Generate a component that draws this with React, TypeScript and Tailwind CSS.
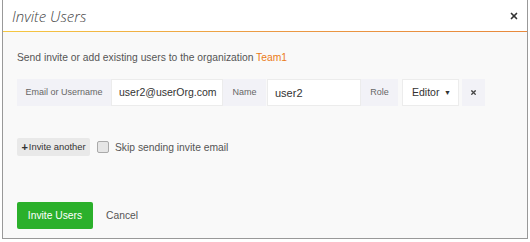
import { X } from 'lucide-react';

const Label = ({ text, className = '' }: { text: string; className?: string }) => (
    <div className={`flex items-center justify-center bg-[#f2f2f7] text-[9px] text-[#666] ${className}`}>{text}</div>
);

const App = () => {
    return (
        <div className="w-[530px] h-[242px] bg-white font-['Liberation_Sans',Arial,sans-serif]">
            <div className="ml-[2px] w-[526px] h-[239px] border border-[#999] border-t-0 bg-[#f9f9f9] flex flex-col">
                {/* Header */}
                <div className="h-[31px] bg-white flex items-center justify-between pl-[9px] pr-[8px] relative">
                    <h2 className="font-['Open_Sans',sans-serif] font-light italic text-[15px] text-[#444] leading-none mt-[1px]">Invite Users</h2>
                    <button className="text-[#333]">
                        <X className="w-[10px] h-[10px]" strokeWidth={4} />
                    </button>
                    <div className="absolute left-0 right-0 -bottom-px h-px bg-gradient-to-r from-[#f5c842] via-[#eb9a45] to-[#e8893c]" />
                </div>

                {/* Body */}
                <div className="flex-1 px-[14px] pt-[19px]">
                    <p className="text-[10.3px] text-[#555]">
                        Send invite or add existing users to the organization <span className="text-[#eb7b18]">Team1</span>
                    </p>

                    <div className="mt-[14px] flex items-stretch h-[27px] text-[#333]">
                        <Label text="Email or Username" className="w-[94px] text-[#555]" />
                        <div className="w-[112px] bg-white border border-[#ececec] flex items-center pl-[7px] text-[10.5px] overflow-hidden whitespace-nowrap">user2@userOrg.com</div>
                        <Label text="Name" className="w-[43px]" />
                        <div className="ml-px w-[94px] bg-white border border-[#ececec] flex items-center pl-[7px] text-[11px]">user2</div>
                        <Label text="Role" className="w-[37px]" />
                        <div className="ml-[4px] w-[57px] bg-white border border-[#ececec] flex items-center justify-between pl-[9px] pr-[7px] text-[10.5px]">
                            Editor
                            <span className="text-[7px]">▼</span>
                        </div>
                        <div className="ml-[3px] w-[23px] bg-[#f2f2f7] flex items-center justify-center">
                            <X className="w-[7px] h-[7px] text-[#444]" strokeWidth={4.5} />
                        </div>
                    </div>

                    <div className="mt-[32px] flex items-center">
                        <button className="w-[73px] h-[18px] bg-[#e9e9e9] text-[9.4px] text-[#333] flex items-center justify-center rounded-[2px]">
                            <span className="font-bold text-[11px] mr-[1px] leading-none">+</span>Invite another
                        </button>
                        <div className="ml-[7px] w-[12px] h-[12px] border border-[#aaa] bg-[#e6e6e6] rounded-[2px]" />
                        <span className="ml-[6px] text-[10.3px] text-[#555]">Skip sending invite email</span>
                    </div>

                    <div className="mt-[46px] flex items-center">
                        <button className="w-[76px] h-[27px] bg-[#2bb02b] text-white text-[10.3px] rounded-[2px]">Invite Users</button>
                        <span className="ml-[13px] text-[10.3px] text-[#555]">Cancel</span>
                    </div>
                </div>
            </div>
        </div>
    );
};

export default App;
